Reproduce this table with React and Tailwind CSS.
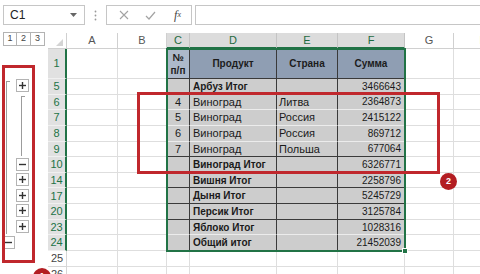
import React from 'react';

const COLS = ['A', 'B', 'C', 'D', 'E', 'F', 'G', 'H'];
const SELECTED = ['C', 'D', 'E', 'F'];

// sheet rows shown after grouping (rows 2-4, 11-13 ... are collapsed)
const ROWS = [
  { n: 1, head: true },
  { n: 5, d: 'Арбуз Итог', f: '3466643', total: true, line: 'light' },
  { n: 6, c: '4', d: 'Виноград', e: 'Литва', f: '2364873', line: 'light' },
  { n: 7, c: '5', d: 'Виноград', e: 'Россия', f: '2415122', line: 'light' },
  { n: 8, c: '6', d: 'Виноград', e: 'Россия', f: '869712', line: 'light' },
  { n: 9, c: '7', d: 'Виноград', e: 'Польша', f: '677064', line: 'dark' },
  { n: 10, d: 'Виноград Итог', f: '6326771', total: true, line: 'dark' },
  { n: 14, d: 'Вишня Итог', f: '2258796', total: true, line: 'dark' },
  { n: 17, d: 'Дыня Итог', f: '5245729', total: true, line: 'dark' },
  { n: 20, d: 'Персик Итог', f: '3125784', total: true, line: 'dark' },
  { n: 23, d: 'Яблоко Итог', f: '1028316', total: true, line: 'light' },
  { n: 24, d: 'Общий итог', f: '21452039', total: true, line: 'none' },
  { n: 25, out: true },
  { n: 26, out: true },
];

const bottomLine = {
  light: 'border-b border-b-[#ececec]',
  dark: 'border-b border-b-[#3a3a3a]',
  none: 'border-b border-b-[#cdcdcd]',
};

const OutlineBtn = ({ minus, className = '' }) => (
  <div className={`flex h-[13px] w-[13px] items-center justify-center self-center border border-[#b3b3b3] bg-white ${className}`}>
    <svg width="7" height="7" viewBox="0 0 7 7">
      <path d="M0 3.5h7" stroke="#333" strokeWidth="1.4" />
      {!minus && <path d="M3.5 0v7" stroke="#333" strokeWidth="1.4" />}
    </svg>
  </div>
);

const TableCell = ({ row, col }) => {
  const right = col === 'F' ? 'border-r border-r-[#d0d0d0]' : 'border-r border-r-[#3a3a3a]';

  if (row.head) {
    const bg = col === 'C' ? 'bg-[#adb9ca]' : 'bg-[#8f9eb3]';
    const label = { D: 'Продукт', E: 'Страна', F: 'Сумма' }[col];
    return (
      <div className={`flex flex-col items-center justify-center ${bg} ${right} border-b border-b-[#3a3a3a] text-[10px] font-bold leading-[13px] text-[#1c1c1c]`}>
        {col === 'C' ? (
          <>
            <span>№</span>
            <span>п/п</span>
          </>
        ) : (
          <span>{label}</span>
        )}
      </div>
    );
  }

  const base = `flex items-center overflow-hidden whitespace-nowrap bg-[#cdcdcd] ${right} ${bottomLine[row.line]} text-[#1a1a1a]`;

  if (col === 'C') return <div className={`${base} justify-center text-[11px]`}>{row.c}</div>;
  if (col === 'D')
    return (
      <div className={`${base} pl-[3px] ${row.total ? 'text-[10px] font-bold' : 'text-[11px]'}`}>{row.d}</div>
    );
  if (col === 'E') return <div className={`${base} pl-[2px] text-[11px]`}>{row.e}</div>;
  return <div className={`${base} justify-end pr-[3px] text-[10px]`}>{row.f}</div>;
};

const SheetRow = ({ row }) => (
  <>
    {row.out ? (
      <div className="flex items-center justify-center border-r border-b border-[#d6d6d6] bg-white text-[11px] text-[#444]">
        {row.n}
      </div>
    ) : (
      <div className="flex items-center justify-center border-b border-b-[#f0f0f0] border-r-2 border-r-[#217346] bg-[#e1e1e1] text-[11px] text-[#217346]">
        {row.n}
      </div>
    )}
    {COLS.map((col) =>
      !row.out && SELECTED.includes(col) ? (
        <TableCell key={col} row={row} col={col} />
      ) : (
        <div key={col} className="border-r border-b border-[#dedede] bg-white" />
      )
    )}
  </>
);

export default function App() {
  return (
    <div className="relative h-[274px] w-[480px] overflow-hidden bg-white font-['Liberation_Sans',Arial,sans-serif] text-[#222]">
      {/* formula bar */}
      <div className="flex h-[33px] items-start pt-[5px]">
        <div className="ml-[3px] flex h-[20px] w-[82px] items-center justify-between border border-[#c6c6c6] pl-[6px] pr-[7px] text-[12px] text-[#222]">
          <span>C1</span>
          <svg width="7" height="4" viewBox="0 0 7 4">
            <path d="M0 0h7L3.5 4z" fill="#666" />
          </svg>
        </div>
        <div className="flex h-[20px] w-[21px] items-center justify-center">
          <svg width="3" height="11" viewBox="0 0 3 11">
            <circle cx="1.5" cy="1.5" r="0.9" fill="#999" />
            <circle cx="1.5" cy="5.5" r="0.9" fill="#999" />
            <circle cx="1.5" cy="9.5" r="0.9" fill="#999" />
          </svg>
        </div>
        <div className="flex h-[20px] w-[86px] items-center border border-[#c6c6c6] pl-[3px]">
          <div className="flex w-[27px] justify-center">
            <svg width="10" height="10" viewBox="0 0 10 10">
              <path d="M1 1l8 8M9 1l-8 8" stroke="#a3a3a3" strokeWidth="1.1" />
            </svg>
          </div>
          <div className="flex w-[27px] justify-center">
            <svg width="11" height="9" viewBox="0 0 11 9">
              <path d="M1 5l3 3 6-7" stroke="#a3a3a3" strokeWidth="1.2" fill="none" />
            </svg>
          </div>
          <div className="flex w-[27px] justify-center font-['Liberation_Serif',serif] text-[12px] italic text-[#444]">
            f<span className="text-[8px] mt-[3px]">x</span>
          </div>
        </div>
        <div className="ml-[3px] h-[20px] flex-1 border border-r-0 border-[#c6c6c6]" />
      </div>

      <div className="flex">
        {/* outline pane */}
        <div className="w-[48px] shrink-0">
          <div className="-mt-[1px] flex h-[16px] pl-[3px]">
            {['1', '2', '3'].map((l, i) => (
              <div
                key={l}
                className={`flex h-[14px] w-[14px] items-center justify-center border border-[#b3b3b3] text-[9px] text-[#444] ${i > 0 ? 'border-l-0' : ''}`}
              >
                {l}
              </div>
            ))}
          </div>
          <div className="h-[30px]" />
          <div className="grid grid-cols-[15px_16px] grid-rows-[repeat(13,15.65px)]">
            <div className="col-start-1 row-start-1 row-end-11 ml-[6px] mt-[3px] w-[4px] border-l border-t border-[#9c9c9c]" />
            <OutlineBtn className="col-start-2 row-start-1 ml-[1px]" />
            <div className="col-start-2 row-start-2 row-end-6 ml-[6px] mt-[2px] w-[4px] border-l border-t border-[#9c9c9c]" />
            <OutlineBtn minus className="col-start-2 row-start-6 ml-[1px]" />
            <OutlineBtn className="col-start-2 row-start-7 ml-[1px]" />
            <OutlineBtn className="col-start-2 row-start-8 ml-[1px]" />
            <OutlineBtn className="col-start-2 row-start-9 ml-[1px]" />
            <OutlineBtn className="col-start-2 row-start-10 ml-[1px]" />
            <OutlineBtn minus className="col-start-1 row-start-11 ml-[2px]" />
          </div>
        </div>

        {/* sheet grid */}
        <div className="grid grid-cols-[19px_51px_49px_23px_87px_61px_67px_49px_60px] grid-rows-[16px_30px_repeat(13,15.65px)]">
          <div className="flex items-end justify-end border-r border-b border-[#d0d0d0] bg-white pb-[2px] pr-[3px]">
            <svg width="7" height="7" viewBox="0 0 7 7">
              <path d="M7 0v7H0z" fill="#d4d4d4" />
            </svg>
          </div>
          {COLS.map((col) =>
            SELECTED.includes(col) ? (
              <div
                key={col}
                className="flex items-center justify-center border-r border-r-[#c4c4c4] border-b-2 border-b-[#217346] bg-[#dcdcdc] text-[11px] text-[#1f6b41]"
              >
                {col}
              </div>
            ) : (
              <div
                key={col}
                className="flex items-center justify-center border-r border-b border-[#d0d0d0] bg-white text-[11px] text-[#555]"
              >
                {col}
              </div>
            )
          )}
          {ROWS.map((row) => (
            <SheetRow key={row.n} row={row} />
          ))}
        </div>
      </div>

      {/* selection frame and fill handle */}
      <div className="pointer-events-none absolute left-[166px] top-[48px] h-[204px] w-[240px] border-2 border-[#217346]" />
      <div className="absolute left-[402px] top-[248px] h-[6px] w-[6px] border border-white bg-[#217346]" />

      {/* callouts */}
      <div className="pointer-events-none absolute left-[2px] top-[65px] h-[198px] w-[33px] border-[3px] border-[#c0282d]" />
      <div className="pointer-events-none absolute left-[137px] top-[92px] h-[82px] w-[303px] border-[3px] border-[#c0282d]" />
      <div className="absolute left-[440px] top-[173px] flex h-[17px] w-[17px] items-center justify-center rounded-full bg-[#b31d22] text-[9px] font-bold text-white">
        2
      </div>
      <div className="absolute left-[33px] top-[268px] flex h-[18px] w-[18px] items-center justify-center rounded-full bg-[#b31d22] text-[9px] font-bold text-white">
        1
      </div>
    </div>
  );
}
